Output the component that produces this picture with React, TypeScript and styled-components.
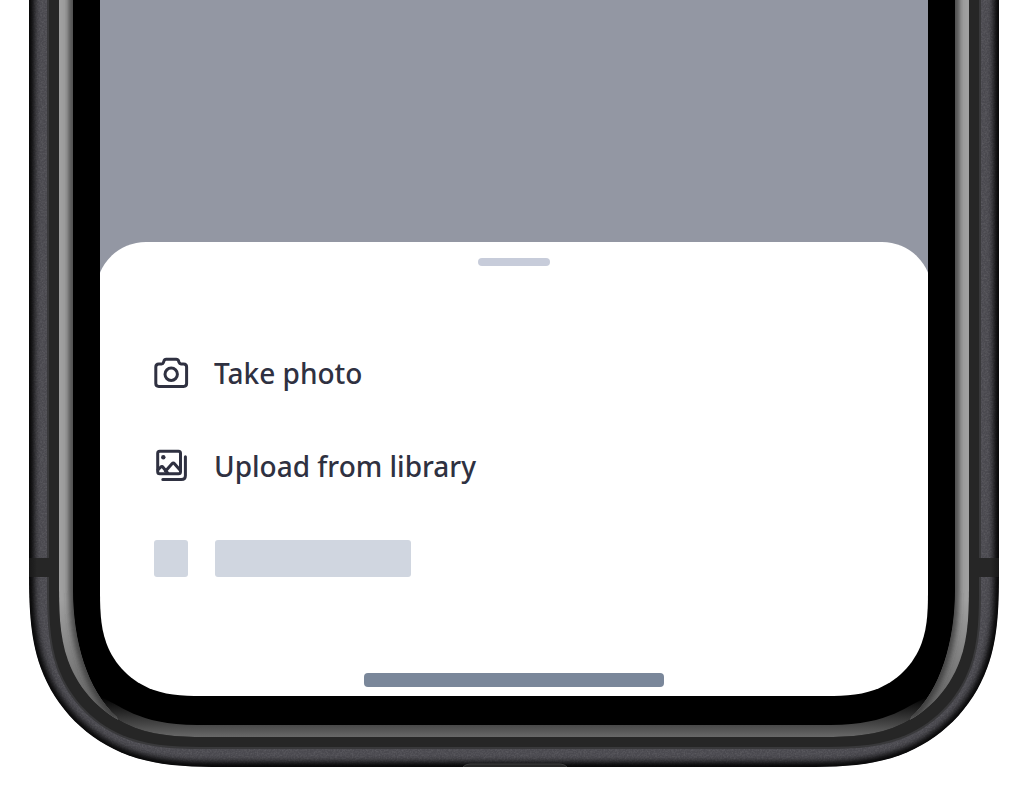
import React from "react";
import styled, { createGlobalStyle } from "styled-components";

const GlobalStyle = createGlobalStyle`
  * { box-sizing: border-box; }
  body {
    margin: 0;
    background: #ffffff;
    font-family: "Noto Sans", sans-serif;
  }
`;

const Page = styled.main`
  padding: 0 29px 29px;
  overflow: hidden;
`;

const Device = styled.div`
  position: relative;
  padding: 0 71px 71px;
`;

const FrameArt = styled.svg`
  position: absolute;
  inset: 0;
  width: 100%;
  height: 100%;
  pointer-events: none;
`;

const Screen = styled.div`
  display: flex;
  flex-direction: column;
  padding-top: 242px;
  background: #9397a3;
  overflow: hidden;
`;

const Sheet = styled.section`
  display: flex;
  flex-direction: column;
  align-items: center;
  margin: 0 -4px;
  padding: 16px 58px 9px;
  border-radius: 50px 50px 0 0;
  background: #ffffff;
`;

const Handle = styled.div`
  width: 72px;
  height: 8px;
  border-radius: 4px;
  background: #c7ccda;
`;

const Actions = styled.ul`
  align-self: stretch;
  display: flex;
  flex-direction: column;
  gap: 53px;
  margin: 0;
  padding: 87px 0 95px;
  list-style: none;
`;

const ActionButton = styled.button`
  display: flex;
  align-items: center;
  gap: 25px;
  width: 100%;
  height: 40px;
  padding: 0;
  border: 0;
  background: none;
  color: #2f3141;
  font: 500 28px/40px "Noto Sans", sans-serif;
  text-align: left;
  cursor: pointer;
`;

const Icon = styled.svg`
  flex: none;
  width: 36px;
  height: 36px;
  margin-left: -1px;
  fill: none;
  stroke: currentColor;
  stroke-width: 3;
  stroke-linecap: round;
  stroke-linejoin: round;
`;

const Placeholder = styled.li`
  display: flex;
  align-items: center;
  gap: 27px;
  height: 39px;
`;

const Block = styled.span<{ $width: number }>`
  width: ${(p) => p.$width}px;
  height: 37px;
  border-radius: 3px;
  background: #d0d6e0;
`;

const HomeIndicator = styled.div`
  width: 300px;
  height: 14px;
  border-radius: 4px;
  background: #7a879a;
`;

const W = 970;
const H = 767;
const MIRROR = `translate(${W} 0) scale(-1 1)`;

/* Outline of one frame layer: straight sides and continuous-curvature bottom corners. */
function outline(inset: number, r: number) {
  const l = inset;
  const b = H - inset;
  const left = (x: number, y: number) => `${l + x * r} ${b - y * r}`;
  const right = (x: number, y: number) => `${W - l - x * r} ${b - y * r}`;
  return [
    `M${l} -20 L${left(0, 1.3)}`,
    `C${left(0, 1.06)} ${left(0, 0.8372)} ${left(0.0749, 0.6315)}`,
    `C${left(0.1691, 0.3728)} ${left(0.3728, 0.1691)} ${left(0.6315, 0.0749)}`,
    `C${left(0.8372, 0)} ${left(1.06, 0)} ${left(1.3, 0)}`,
    `L${right(1.3, 0)}`,
    `C${right(1.06, 0)} ${right(0.8372, 0)} ${right(0.6315, 0.0749)}`,
    `C${right(0.3728, 0.1691)} ${right(0.1691, 0.3728)} ${right(0.0749, 0.6315)}`,
    `C${right(0, 0.8372)} ${right(0, 1.06)} ${right(0, 1.3)}`,
    `L${W - l} -20 Z`,
  ].join(" ");
}

const body = outline(0, 157);
const lip = outline(18, 128);
const band = outline(20, 126);
const rim = outline(30, 121);
const screenHole = outline(71, 84);
const sideEdge = "M44 -20 V590 C44 640 58 690 88 717";
const sideShine = `${sideEdge} L96 740 H20 V-20 Z`;
const bottomShine =
  "M71 697 C91 704 108 725 168 725 H802 C862 725 879 704 899 697 V767 H71 Z";

function SideShine() {
  return (
    <g clipPath="url(#sideClip)">
      <path d={sideShine} fill="#a0a0a0" />
      <path d={sideShine} fill="url(#sideFade)" />
      <path d={sideEdge} fill="none" stroke="#363636" strokeWidth="7" filter="url(#soft)" />
    </g>
  );
}

function PhoneFrame() {
  return (
    <FrameArt viewBox={`0 0 ${W} ${H}`} preserveAspectRatio="none" aria-hidden="true">
      <defs>
        <clipPath id="bodyClip"><path d={body} /></clipPath>
        <clipPath id="rimClip"><path d={rim} /></clipPath>
        <clipPath id="sideClip"><path d={sideShine} /></clipPath>
        <mask id="screenMask" maskUnits="userSpaceOnUse" x="0" y="0" width={W} height={H}>
          <rect width={W} height={H} fill="#fff" />
          <path d={screenHole} fill="#000" />
        </mask>
        <filter id="soft" filterUnits="userSpaceOnUse" x="-30" y="-40" width="1030" height="840">
          <feGaussianBlur stdDeviation="3" />
        </filter>
        <filter id="grain" filterUnits="userSpaceOnUse" x="0" y="0" width={W} height={H}>
          <feTurbulence type="fractalNoise" baseFrequency="0.6" numOctaves="2" />
          <feColorMatrix values="0 0 0 0 1  0 0 0 0 1  0 0 0 0 1  0.5 0 0 0 -0.18" />
        </filter>
        <linearGradient id="sideFade" gradientUnits="userSpaceOnUse" x1="0" x2="0" y1="600" y2="718">
          <stop offset="0" stopColor="#444" stopOpacity="0" />
          <stop offset="1" stopColor="#444" stopOpacity="0.7" />
        </linearGradient>
        <linearGradient id="bottom" gradientUnits="userSpaceOnUse" x1="0" x2="0" y1="697" y2="737">
          <stop offset="0" stopColor="#000" />
          <stop offset="0.7" stopColor="#484848" />
          <stop offset="1" stopColor="#686868" />
        </linearGradient>
        <linearGradient id="antenna" x1="0" x2="1">
          <stop offset="0" stopColor="#171717" />
          <stop offset="0.4" stopColor="#262626" />
        </linearGradient>
      </defs>
      <g mask="url(#screenMask)">
        <g clipPath="url(#bodyClip)">
          <path d={body} fill="#4a494f" />
          <rect width={W} height={H} filter="url(#grain)" opacity="0.4" />
          <path d={body} fill="none" stroke="#050506" strokeWidth="10" filter="url(#soft)" />
          <rect x="431" y="764" width="110" height="20" rx="10" fill="#262626" stroke="#3c3c3c" />
          <path d={lip} fill="#39393b" />
          <rect x="0" y="558" width="20" height="19" fill="url(#antenna)" />
          <rect x="0" y="558" width="20" height="19" fill="url(#antenna)" transform={MIRROR} />
          <path d={band} fill="#262626" />
          <path d={rim} fill="#000" />
        </g>
        <g clipPath="url(#rimClip)">
          <path d={bottomShine} fill="url(#bottom)" />
          <SideShine />
          <g transform={MIRROR}><SideShine /></g>
        </g>
      </g>
    </FrameArt>
  );
}

function CameraIcon() {
  return (
    <Icon viewBox="0 0 36 36" aria-hidden="true">
      <path d="M5.8 9 H8.6 Q10 9 10.4 7.6 L10.9 6 Q11.4 4.2 13.2 4.2 H23.2 Q25 4.2 25.6 6 L26.1 7.6 Q26.6 9 28 9 H30.6 Q33.6 9 33.6 12 V28.5 Q33.6 31.4 30.6 31.4 H5.8 Q2.8 31.4 2.8 28.5 V12 Q2.8 9 5.8 9 Z" />
      <circle cx="18.2" cy="19.3" r="6.2" />
    </Icon>
  );
}

function LibraryIcon() {
  return (
    <Icon viewBox="0 0 36 36" aria-hidden="true">
      <rect x="4.7" y="3.2" width="22.8" height="22.6" rx="2" />
      <path d="M32.4 8.8 V27.4 Q32.4 31.4 28.4 31.4 H9.8" />
      <path d="M5 21.8 L7.8 19 Q9 18 10 19.2 L14.6 25 M12.4 23.2 L19 15.8 Q20.3 14.4 21.5 15.8 L27.2 22.2" />
      <circle cx="10.3" cy="9.2" r="2.2" fill="currentColor" stroke="none" />
    </Icon>
  );
}

export default function App() {
  return (
    <>
      <GlobalStyle />
      <Page>
        <Device>
          <Screen>
            <Sheet aria-label="Add a photo">
              <Handle />
              <Actions>
                <li>
                  <ActionButton type="button"><CameraIcon />Take photo</ActionButton>
                </li>
                <li>
                  <ActionButton type="button"><LibraryIcon />Upload from library</ActionButton>
                </li>
                <Placeholder aria-hidden="true">
                  <Block $width={34} />
                  <Block $width={196} />
                </Placeholder>
              </Actions>
              <HomeIndicator />
            </Sheet>
          </Screen>
          <PhoneFrame />
        </Device>
      </Page>
    </>
  );
}
